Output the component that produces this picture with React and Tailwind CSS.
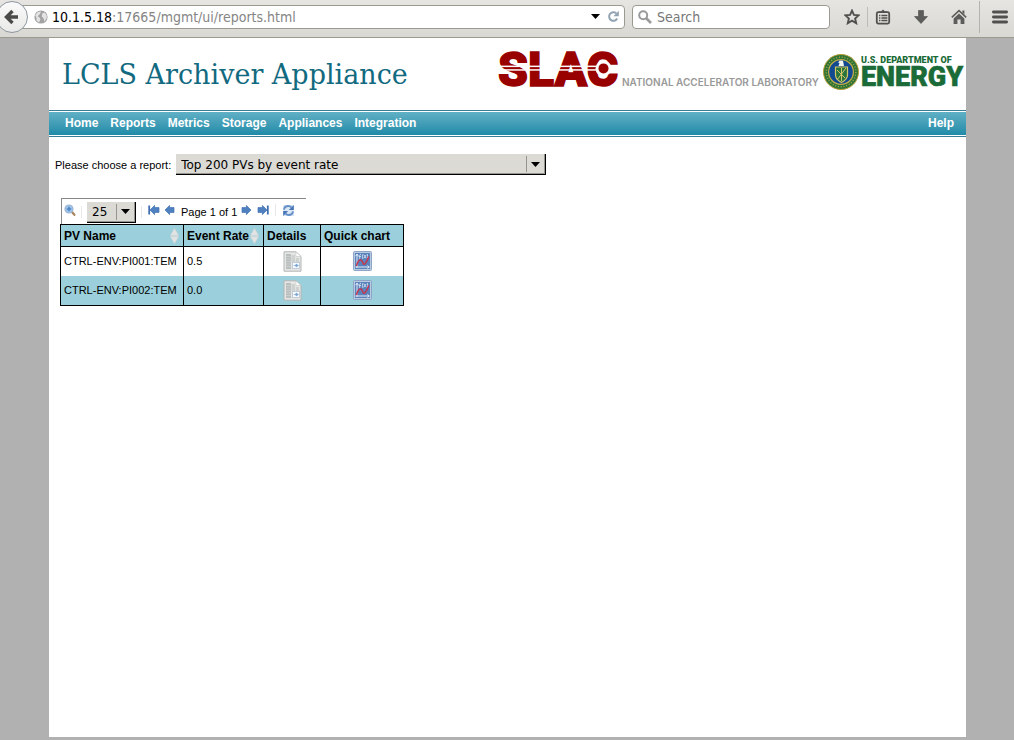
import React from "react";

const NAV_ITEMS = ["Home", "Reports", "Metrics", "Storage", "Appliances", "Integration"];

const ROWS = [
  { name: "CTRL-ENV:PI001:TEM", rate: "0.5" },
  { name: "CTRL-ENV:PI002:TEM", rate: "0.0" },
];

function BackIcon() {
  return (
    <svg width="16" height="16" viewBox="0 0 16 16" aria-hidden="true">
      <path d="M8.5 2 L2.5 8 L8.5 14 M3 8 H14" fill="none" stroke="#4b4b49" strokeWidth="3.4" />
    </svg>
  );
}

function GlobeIcon() {
  return (
    <svg width="14" height="14" viewBox="0 0 14 14" aria-hidden="true" className="shrink-0">
      <circle cx="7" cy="7" r="6.6" fill="#a3a3a3" />
      <path d="M1.2 5 L4 2 L7 1.6 L6 4 L3.6 6.2 L5.6 7.4 L6.4 9.4 L5 12.6 L2.4 10.6 L2.6 8.2 Z M8.2 3.6 L10.8 2.6 L12.8 5.4 L12.6 8.6 L10.4 11.4 L9.6 8.4 L7.8 6.6 Z" fill="#e3e3e3" />
    </svg>
  );
}

function ReloadIcon() {
  return (
    <svg width="13" height="13" viewBox="0 0 13 13" aria-hidden="true">
      <path d="M9.2 3.2 A4.3 4.3 0 1 0 10.2 8.6" fill="none" stroke="#92a3b3" strokeWidth="2" />
      <path d="M11.8 0.8 V6.2 H6.4 Z" fill="#92a3b3" />
    </svg>
  );
}

function SearchIcon() {
  return (
    <svg width="14" height="14" viewBox="0 0 14 14" aria-hidden="true" className="shrink-0">
      <circle cx="5.2" cy="5.2" r="4" fill="none" stroke="#9a9a9a" strokeWidth="2" />
      <path d="M8 8 L13 13" stroke="#9a9a9a" strokeWidth="2.6" />
    </svg>
  );
}

function StarIcon() {
  return (
    <svg width="16" height="16" viewBox="0 0 16 16" aria-hidden="true">
      <path d="M8 1.6 L9.9 5.9 L14.6 6.3 L11.1 9.5 L12.2 14.2 L8 11.7 L3.8 14.2 L4.9 9.5 L1.4 6.3 L6.1 5.9 Z" fill="none" stroke="#50504e" strokeWidth="1.9" />
    </svg>
  );
}

function ClipboardIcon() {
  return (
    <svg width="16" height="16" viewBox="0 0 16 16" aria-hidden="true">
      <rect x="1.8" y="3.2" width="12.4" height="11.4" rx="1.5" fill="none" stroke="#50504e" strokeWidth="1.8" />
      <path d="M4 4 V2.6 H6 L8 0.6 L10 2.6 H12 V4 Z" fill="#50504e" />
      <path d="M4 6.5 H5.4 M6.4 6.5 H12.4 M4 9 H5.4 M6.4 9 H12.4 M4 11.5 H5.4 M6.4 11.5 H12.4" stroke="#50504e" strokeWidth="1.4" />
    </svg>
  );
}

function DownloadIcon() {
  return (
    <svg width="16" height="16" viewBox="0 0 16 16" aria-hidden="true">
      <path d="M5.5 1.5 H10.5 V7.5 H14.5 L8 14.5 L1.5 7.5 H5.5 Z" fill="#5c5c5a" stroke="#4b4b49" strokeWidth="0.6" />
    </svg>
  );
}

function HomeIcon() {
  return (
    <svg width="16" height="16" viewBox="0 0 16 16" aria-hidden="true">
      <path d="M0.8 8.4 L8 1.6 L15.2 8.4" fill="none" stroke="#5c5c5a" strokeWidth="1.6" />
      <path d="M11.4 1.6 H13.4 V5.4 L11.4 3.6 Z" fill="#5c5c5a" />
      <path d="M8 4.4 L13.4 9.4 V15 H9.6 V10.4 H6.4 V15 H2.6 V9.4 Z" fill="#5c5c5a" />
    </svg>
  );
}

function MenuIcon() {
  return (
    <svg width="16" height="14" viewBox="0 0 16 14" aria-hidden="true">
      <path d="M1.4 2 H14.6 M1.4 7 H14.6 M1.4 12 H14.6" stroke="#50504e" strokeWidth="2.8" strokeLinecap="round" />
    </svg>
  );
}

function ToolbarButton({ label, children, className = "" }) {
  return (
    <button type="button" aria-label={label} className={"flex items-center justify-center " + className}>
      {children}
    </button>
  );
}

function BrowserBar() {
  return (
    <header className="flex h-[38px] items-center overflow-hidden border-b border-[#9b9990] bg-gradient-to-b from-[#e6e5e2] to-[#d9d8d3] pb-1 pr-[6px] font-['DejaVu_Sans_Condensed','Noto_Sans',sans-serif] text-[14px]">
      <div className="-ml-1 flex flex-1 items-center">
        <button type="button" aria-label="Back" className="z-10 flex size-8 shrink-0 items-center justify-center rounded-full border border-[#8e97a0] bg-gradient-to-b from-[#fafafa] to-[#e9e9e7]">
          <BackIcon />
        </button>
        <form className="-ml-3 flex h-6 flex-1 items-center rounded-r-sm border border-[#9b9990] bg-white pl-[17px] pr-1">
          <GlobeIcon />
          <p className="ml-1 flex-1 leading-5 text-[#858585]">
            <span className="text-black">10.1.5.18</span>:17665/mgmt/ui/reports.html
          </p>
          <ToolbarButton label="Show history" className="mr-[7px]">
            <svg width="9" height="5" viewBox="0 0 9 5" aria-hidden="true"><path d="M0 0 H9 L4.5 5 Z" fill="#000" /></svg>
          </ToolbarButton>
          <ToolbarButton label="Reload"><ReloadIcon /></ToolbarButton>
        </form>
      </div>
      <label className="ml-[7px] flex h-6 w-[198px] items-center rounded-sm border border-[#9b9990] bg-white pl-[5px]">
        <SearchIcon />
        <input type="search" aria-label="Search" placeholder="Search" className="ml-[5px] w-full min-w-0 bg-transparent leading-5 outline-none placeholder:text-[#777]" />
      </label>
      <ToolbarButton label="Bookmark this page" className="ml-[14px]"><StarIcon /></ToolbarButton>
      <span className="ml-[7px] h-5 w-px bg-[#bdbcb8]" />
      <ToolbarButton label="Bookmarks" className="ml-[7px]"><ClipboardIcon /></ToolbarButton>
      <ToolbarButton label="Downloads" className="ml-[22px]"><DownloadIcon /></ToolbarButton>
      <ToolbarButton label="Home page" className="ml-[22px]"><HomeIcon /></ToolbarButton>
      <span className="ml-3 h-8 w-px bg-[#b3b3b0]" />
      <ToolbarButton label="Open menu" className="ml-3"><MenuIcon /></ToolbarButton>
    </header>
  );
}

function Logos() {
  return (
    <svg width="468" height="62" viewBox="0 -10 468 62" role="img" aria-label="SLAC National Accelerator Laboratory, U.S. Department of Energy" className="shrink-0">
      <text x="0" y="37" fontFamily="Roboto" fontWeight="900" fontSize="48" fill="#990000" stroke="#990000" strokeWidth="1.4">SLAC</text>
      <rect x="0" y="16.6" width="98" height="1.5" fill="#fff" />
      <rect x="0" y="20.2" width="98" height="1.5" fill="#fff" />
      <circle cx="105.5" cy="19.4" r="8" fill="#fff" />
      <circle cx="105.5" cy="19.4" r="5" fill="#990000" />
      <text x="124" y="37" fontFamily="Inter" fontWeight="600" fontSize="10" fill="#999">NATIONAL ACCELERATOR LABORATORY</text>
      <circle cx="343" cy="23" r="17.5" fill="#2f7436" stroke="#b79d35" strokeWidth="1" />
      <circle cx="343" cy="23" r="14.8" fill="none" stroke="#a9a64a" strokeWidth="1.4" strokeDasharray="1 1.8" />
      <circle cx="343" cy="23" r="12.4" fill="#124a91" stroke="#c3ac48" strokeWidth="1.2" />
      <path d="M337.5 18 H349.5 V26 Q349.5 30.5 343.5 33.5 Q337.5 30.5 337.5 26 Z" fill="#2a743d" stroke="#d6c567" strokeWidth="1.2" />
      <path d="M339 31 L348 19 M339 21 L347 29 M343.5 19 V32" stroke="#d6c567" strokeWidth="1" />
      <path d="M340.5 17 L341.5 14 L340 13.4 L341.8 11.4 L345 11.8 L346 17 Z" fill="#f5f5ef" />
      <text x="363" y="14" fontFamily="Roboto" fontWeight="900" fontSize="9" fill="#1a6b37">U.S. DEPARTMENT OF</text>
      <text x="363" y="37" fontFamily="Roboto" fontWeight="900" fontSize="27" fill="#1a6b37" stroke="#1a6b37" strokeWidth="0.6">ENERGY</text>
    </svg>
  );
}

function SelectBox({ id, label, width, children }) {
  return (
    <span className={"relative inline-flex " + width}>
      <select id={id} aria-label={label} className="h-[21px] w-full appearance-none border-b border-r border-black bg-[#dbdad5] pl-[5px] pr-5 pt-px font-['DejaVu_Sans',sans-serif] text-[12px] leading-[18px] text-black shadow-[inset_-1px_-1px_0_#96958f]">
        {children}
      </select>
      <span className="pointer-events-none absolute bottom-[3px] right-[6px] top-[2px] flex items-center border-l border-[#96958f] pl-1">
        <svg width="9" height="5" viewBox="0 0 9 5" aria-hidden="true"><path d="M0 0 H9 L4.5 5 Z" fill="#000" /></svg>
      </span>
    </span>
  );
}

function PagerIcon({ flip, bar }) {
  return (
    <svg width="12" height="10" viewBox="0 0 12 10" aria-hidden="true" className={flip ? "-scale-x-100" : ""}>
      {bar && <path d="M1.2 0.5 V9.5" stroke="#3f6fb0" strokeWidth="1.8" />}
      <path d="M2 5 L6.6 0.4 V2.6 H11 V7.4 H6.6 V9.6 Z" fill="#4f80c0" stroke="#3f70b2" strokeWidth="0.7" />
    </svg>
  );
}

function MagnifierIcon() {
  return (
    <svg width="13" height="13" viewBox="0 0 13 13" aria-hidden="true">
      <path d="M7.5 7.5 L10.4 10.8" stroke="#a8835c" strokeWidth="2.2" strokeLinecap="round" />
      <circle cx="5" cy="5" r="4" fill="#9cc3eb" stroke="#9fb6d1" strokeWidth="1.2" />
      <path d="M5 2.8 V7.2 M2.8 5 H7.2" stroke="#4d83c2" strokeWidth="1.5" />
    </svg>
  );
}

function RefreshIcon() {
  return (
    <svg width="13" height="13" viewBox="0 0 13 13" aria-hidden="true">
      <rect x="1" y="1" width="11" height="11" fill="#dbe7f5" />
      <path d="M2 5.6 Q2.6 2 6.2 2 Q8.2 2 9.4 3.4" fill="none" stroke="#6690c8" strokeWidth="2" />
      <path d="M11.8 1 V6 H6.8 Z" fill="#4675b6" />
      <path d="M11 7.4 Q10.4 11 6.8 11 Q4.8 11 3.6 9.6" fill="none" stroke="#6690c8" strokeWidth="2" />
      <path d="M1.2 12 V7 H6.2 Z" fill="#4675b6" />
    </svg>
  );
}

function SortIcon() {
  return (
    <svg width="9" height="16" viewBox="0 0 9 16" aria-hidden="true">
      <path d="M4.5 0.5 L8.5 7.4 H0.5 Z M4.5 15.5 L0.5 8.6 H8.5 Z" fill="#e3e3e3" stroke="#d3d9da" strokeWidth="0.6" />
    </svg>
  );
}

function DetailsIcon() {
  return (
    <svg width="19" height="21" viewBox="0 0 19 21" aria-hidden="true">
      <path d="M1 0.8 H13 L18 5.5 V20.2 H1 Z" fill="#e6e7e5" stroke="#b2b6b5" />
      <path d="M3 3 H8 V18 H3 Z" fill="#b9bfbe" />
      <path d="M8.5 4 H12 V11 H8.5 Z M12.8 7 H16 V11 H12.8 Z" fill="#cdd1d0" />
      <path d="M3 5.5 H8 M3 8 H8 M3 10.5 H8 M3 13 H8 M3 15.5 H8" stroke="#cfd3d2" strokeWidth="0.8" />
      <path d="M13 1 V5.5 H18 Z" fill="#fff" stroke="#c3c6c5" strokeWidth="0.6" />
      <rect x="9.5" y="11.5" width="7" height="6" fill="#f8fbff" stroke="#b6c3d2" strokeWidth="0.8" />
      <path d="M10.8 14.5 H13.4 M13 13 L15.4 14.5 L13 16 Z" fill="#7ba6d8" stroke="#7ba6d8" strokeWidth="0.8" />
    </svg>
  );
}

function ChartIcon() {
  return (
    <svg width="19" height="20" viewBox="0 0 19 20" aria-hidden="true">
      <rect x="0.5" y="0.5" width="18" height="19" rx="1" fill="#b9cbe3" stroke="#8ea5c6" />
      <rect x="2" y="2" width="15" height="16" fill="#5a82bb" />
      <path d="M4 17 V3.5 M2.6 5.2 L4 3 L5.4 5.2 M2.5 16 H16 M14.4 14.6 L16.4 16 L14.4 17.4" fill="none" stroke="#e4edf8" strokeWidth="1" />
      <path d="M8 3.2 Q6.8 3 6.7 4.5 V8.4 M5.6 5.4 H8 M10 3 Q8.8 5.4 10 8 M11 4 L13 7 M13 4 L11 7 M14.2 3 Q15.4 5.4 14.2 8" fill="none" stroke="#d3e1f2" strokeWidth="0.9" />
      <path d="M3.4 15 Q5.4 8.6 7.4 8.8 Q8.8 9 9.8 11.8 Q10.8 14.2 12.2 12.6 Q14 10.4 15.8 5.4" fill="none" stroke="#c53650" strokeWidth="1.5" />
    </svg>
  );
}

function Divider({ className }) {
  return <span className={"h-3 w-px bg-[#e8e8e8] " + className} />;
}

function Pager() {
  return (
    <div className="ml-px flex h-[26px] w-[245px] items-center border-l border-t border-[#888] pl-[2px]">
      <ToolbarButton label="Search table" className="pb-[2px]"><MagnifierIcon /></ToolbarButton>
      <Divider className="ml-1 mr-[5px]" />
      <div className="flex pt-px">
        <SelectBox label="Rows per page" width="w-[49px]">
          <option>25</option>
        </SelectBox>
      </div>
      <Divider className="ml-[5px] mr-[6px]" />
      <div className="flex flex-1 items-center pb-[3px]">
        <ToolbarButton label="First page"><PagerIcon bar /></ToolbarButton>
        <ToolbarButton label="Previous page" className="ml-[3px]"><PagerIcon /></ToolbarButton>
        <span className="ml-[6px] mr-1 whitespace-nowrap pt-[3px]">Page 1 of 1</span>
        <ToolbarButton label="Next page"><PagerIcon flip /></ToolbarButton>
        <ToolbarButton label="Last page" className="ml-1"><PagerIcon flip bar /></ToolbarButton>
        <Divider className="mx-[6px]" />
        <ToolbarButton label="Refresh"><RefreshIcon /></ToolbarButton>
      </div>
    </div>
  );
}

function HeaderCell({ width, sortable, children }) {
  return (
    <th scope="col" className={"h-[22px] border border-black p-0 pl-[3px] pr-1 text-left text-[12px] font-bold " + width}>
      <span className="flex items-center justify-between whitespace-nowrap">
        {children}
        {sortable && <button type="button" aria-label={"Sort by " + children}><SortIcon /></button>}
      </span>
    </th>
  );
}

function ReportTable() {
  return (
    <table className="w-[344px] table-fixed border-collapse border border-black">
      <thead className="bg-[#9acfdb]">
        <tr>
          <HeaderCell width="w-[123px]" sortable>PV Name</HeaderCell>
          <HeaderCell width="w-[80px]" sortable>Event Rate</HeaderCell>
          <HeaderCell width="w-[57px]">Details</HeaderCell>
          <HeaderCell width="w-[83px]">Quick chart</HeaderCell>
        </tr>
      </thead>
      <tbody>
        {ROWS.map((row) => (
          <tr key={row.name} className="h-[29px] even:h-[30px] even:bg-[#9acfdb]">
            <td className="whitespace-nowrap border-x border-black p-0 pl-[3px]">{row.name}</td>
            <td className="border-x border-black p-0 pl-[3px]">{row.rate}</td>
            <td className="border-x border-black p-0">
              <ToolbarButton label={"Details for " + row.name} className="mx-auto"><DetailsIcon /></ToolbarButton>
            </td>
            <td className="border-x border-black p-0">
              <ToolbarButton label={"Quick chart for " + row.name} className="mx-auto"><ChartIcon /></ToolbarButton>
            </td>
          </tr>
        ))}
      </tbody>
    </table>
  );
}

export default function App() {
  return (
    <div className="flex min-h-screen flex-col bg-[#b1b1b1] font-['Liberation_Sans',Arial,sans-serif] text-[11px] leading-4 text-black">
      <BrowserBar />
      <div className="flex flex-1 flex-col pb-[3px] pl-[49px] pr-12">
        <div className="flex-1 bg-white">
          <div className="flex h-[72px] items-center justify-between pl-[13px]">
            <h1 className="whitespace-nowrap pt-[2px] font-['DejaVu_Serif',serif] text-[27px] leading-8 text-[#126a80]">LCLS Archiver Appliance</h1>
            <div className="pb-2"><Logos /></div>
          </div>
          <nav className="border-y border-[#3a7d96] py-px">
            <div className="flex h-[23px] items-center gap-3 bg-gradient-to-b from-[#5fb0c5] to-[#1d8ba8] pb-[2px] pl-4 pr-3 text-[12px] font-bold text-white">
              {NAV_ITEMS.map((item) => (
                <a key={item} href="#">{item}</a>
              ))}
              <a href="#" className="ml-auto">Help</a>
            </div>
          </nav>
          <main className="pt-[17px]">
            <div className="flex items-center gap-[5px] pl-[6px]">
              <label htmlFor="report">Please choose a report:</label>
              <SelectBox id="report" width="w-[370px]">
                <option>Top 200 PVs by event rate</option>
              </SelectBox>
            </div>
            <section className="pl-[11px] pt-[23px]">
              <Pager />
              <ReportTable />
            </section>
          </main>
        </div>
      </div>
    </div>
  );
}
